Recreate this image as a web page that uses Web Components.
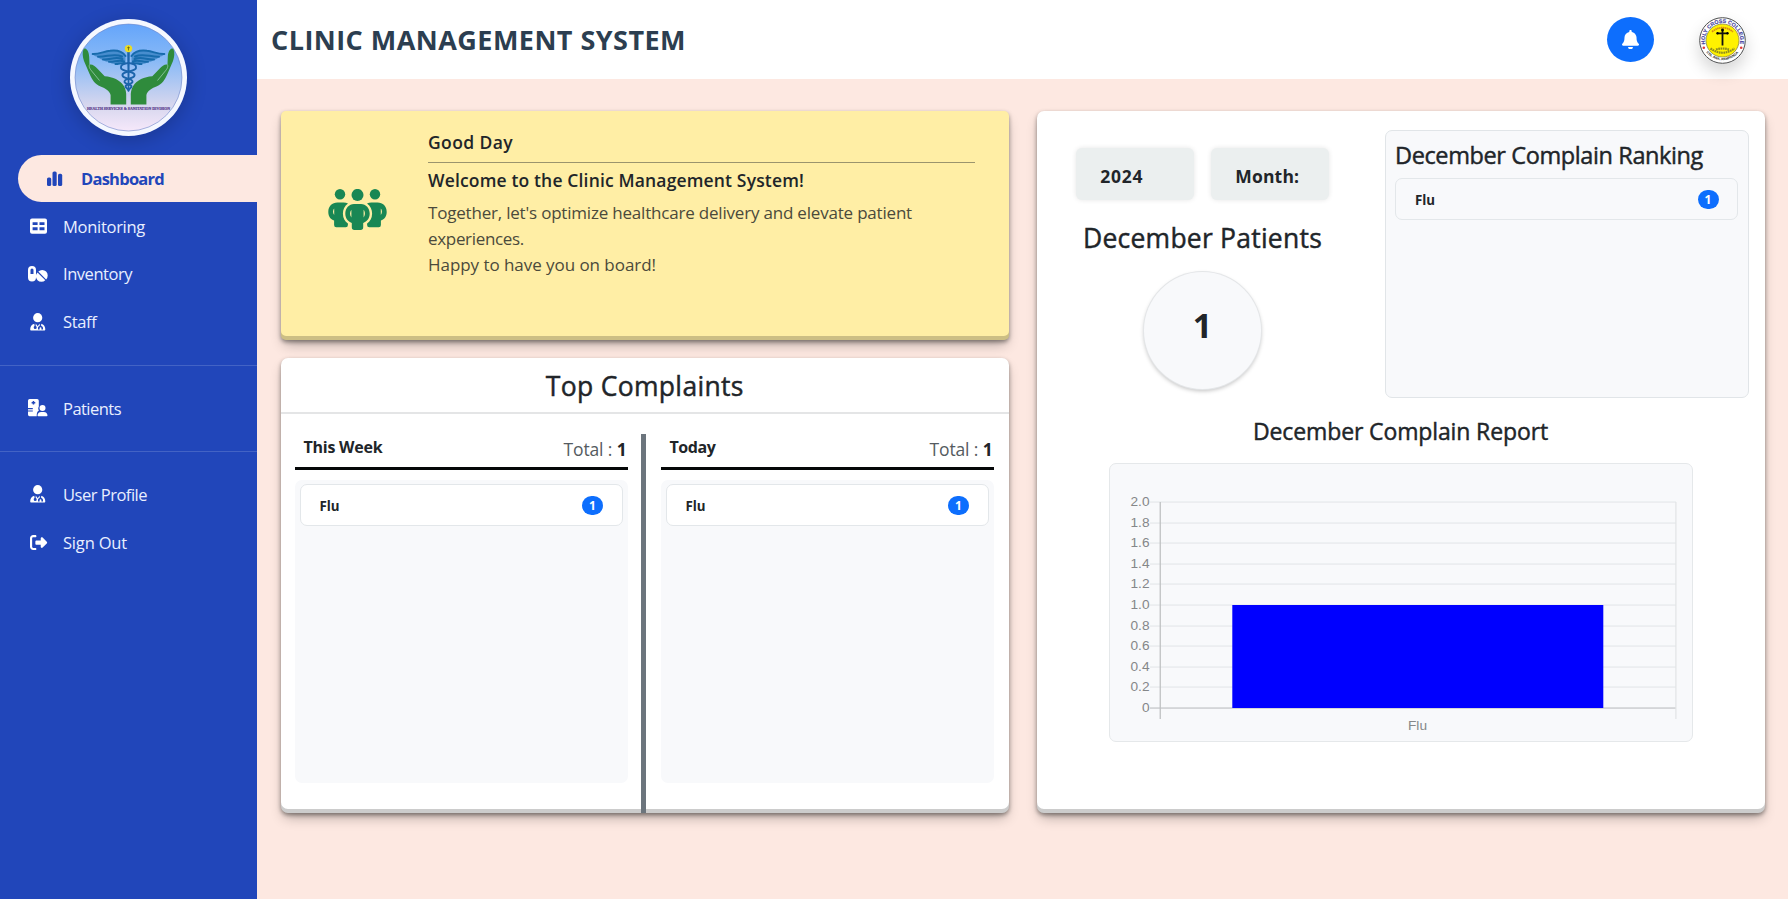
<!DOCTYPE html>
<html lang="en">
<head>
<meta charset="utf-8">
<title>Clinic Management System</title>
<style>
html,body{margin:0;height:100%;overflow:hidden}
body{background:#fde8e1;color:#212529;font-family:"Open Sans","Noto Sans",sans-serif}
</style>
</head>
<body>
<clinic-app></clinic-app>
<script>
const define=(name,html,init)=>{
  const t=document.createElement('template');
  t.innerHTML=html;
  customElements.define(name,class extends HTMLElement{
    constructor(){super();this.attachShadow({mode:'open'}).append(t.content.cloneNode(true));}
    connectedCallback(){if(init)init(this,this.shadowRoot);}
  });
};

/* One line of text whose tracking is adjusted to fill the given width */
define('fit-text',`<style>:host{display:block;white-space:nowrap;line-height:24px;width:max-content}:host([weight="500"]){-webkit-text-stroke:.45px currentColor}span{display:inline-block}</style><span><slot></slot></span>`,
(el,root)=>{
  el.style.fontSize=el.getAttribute('size')+'px';
  el.style.fontWeight=el.getAttribute('weight')||'400';
  const s=root.querySelector('span'),w=+el.getAttribute('w');
  if(w){
    const n=el.textContent.length,extra=(w-s.getBoundingClientRect().width)/n;
    s.style.letterSpacing=extra.toFixed(3)+'px';
  }
});

const icons={
dashboard:'<rect x="0" y="6.5" width="4.200" height="8.5" rx="1.6"/><rect x="5.500" y="0.5" width="4.200" height="14.5" rx="1.6"/><rect x="11" y="2.8" width="4.200" height="12.2" rx="1.6"/>',
table:'<path fill-rule="evenodd" d="M2 .5h13a2 2 0 0 1 2 2v11.300a2 2 0 0 1-2 2H2a2 2 0 0 1-2-2V2.500a2 2 0 0 1 2-2zM2.600 4.200v2.900h5V4.200zm6.900 0v2.900h5V4.200zM2.600 9.300v3h5v-3zm6.900 0v3h5v-3z"/>',
pills:'<path fill-rule="evenodd" d="M4 0a4 4 0 0 1 4 4v7.500a4 4 0 0 1-8 0V4a4 4 0 0 1 4-4zM2.500 4v4h3V4a1.500 1.500 0 0 0-3 0z"/><path d="M10.300 5.600a5.500 5.500 0 0 1 7.800 7.800zM9.500 6.400l7.800 7.800a5.500 5.500 0 0 1-7.800-7.800z"/>',
doctor:'<circle cx="7.700" cy="4.700" r="4.600"/><path fill-rule="evenodd" d="M4.300 10.700C1.600 11.500.2 13.600.2 16.300c0 .8.4 1.300 1.100 1.300h12.900c.7 0 1.100-.5 1.100-1.300 0-2.700-1.400-4.800-4.100-5.600v2.200c1.200.3 1.800 1 1.800 2.200v1.300h-1.600v-1.200c0-.7-.3-1-.9-1s-.9.300-.9 1v1.200H8V15c0-1.200.6-1.900 1.700-2.100v-2.400l-2 2.800-2-2.800v2.600c.7.300 1 .8 1 1.400a1.500 1.500 0 1 1-3 0c0-.6.3-1.100.900-1.400z"/>',
patient:'<path fill-rule="evenodd" d="M1.800 0h7.300a1.700 1.700 0 0 1 1.700 1.700v5.700c-1 1.600-.5 3.200.1 4-1.600.9-2.300 2.800-2.200 5.900H1.800A1.700 1.700 0 0 1 0 15.600v-3h4.800v-1.100H0v-1.300h4.800V9H0V1.700A1.700 1.700 0 0 1 1.800 0zM4.700 2v1H3.600v1.500h1.100v1.100h1.500V4.500h1.100V3H6.200V2z"/><circle cx="14.500" cy="9" r="3"/><path d="M13.200 12.900h2.600c2.300 0 3.700 1.500 3.700 3.600 0 .5-.4.800-.9.800H10.400c-.5 0-.9-.3-.9-.8 0-2.100 1.400-3.600 3.700-3.600z"/>',
signout:'<path transform="scale(.0335)" d="M377.900 105.900L500.700 228.700c7.200 7.200 11.300 17.100 11.300 27.300s-4.100 20.100-11.300 27.300L377.900 406.100c-6.400 6.400-15 9.900-24 9.900c-18.700 0-33.900-15.200-33.900-33.900l0-62.100-128 0c-17.700 0-32-14.300-32-32l0-64c0-17.700 14.300-32 32-32l128 0 0-62.100c0-18.700 15.200-33.900 33.900-33.900c9 0 17.600 3.600 24 9.900zM160 96L96 96c-17.700 0-32 14.300-32 32l0 256c0 17.700 14.300 32 32 32l64 0c17.700 0 32 14.300 32 32s-14.300 32-32 32l-64 0c-53 0-96-43-96-96L0 128C0 75 43 32 96 32l64 0c17.700 0 32 14.300 32 32s-14.300 32-32 32z"/>'
};
const dims={dashboard:[16,15],table:[17,16],pills:[20,15],doctor:[16,18],patient:[20,18],signout:[17,17]};

define('nav-item',`<style>
:host{display:flex;align-items:center;height:47.800px;color:#e9efff;box-sizing:border-box;padding-left:24px}
:host([active]){margin-left:18px;background:#fde8e1;color:#2146ba;border-radius:24px 0 0 24px}
.i{width:28px;display:flex;justify-content:center;flex:none;margin-right:11px}
svg{fill:#fff;display:block;overflow:visible}
:host([active]) .i{width:26px;margin-right:13px}
:host([active]) svg{fill:#2146ba}
slot{display:block;padding-top:1px}
</style><div class="i"></div><slot></slot>`,(el,root)=>{
  const k=el.getAttribute('icon'),[w,h]=dims[k];
  root.querySelector('.i').innerHTML=`<svg width="${w}" height="${h}" viewBox="0 0 ${w} ${h}">${icons[k]}</svg>`;
});

const halfEmblem=`
<path fill="#2f8b3c" d="M15 29.500c2.500.5 4 4 4.200 8.500l.3 7.500c2.800-.6 5.200 1 8 4.200l7.200 7.600c8 .6 15.500 3.800 19 9.500 2 3.300 2.800 7 2.500 11V85.500H40.600V76c-1-4-5-6.500-10-8.500-6-2.500-8.500-7-11-12.500L14 42c-1.500-4-1.700-9-.6-11.500.4-.8.900-1.100 1.600-1z"/>
<path fill="none" stroke="#8ec4a0" stroke-width=".9" d="M19.500 45.500c-1 3 1 5 3 7.500l7 8.500"/>
<path fill="#176bad" fill-opacity=".55" d="M55.500 38C52 32 46 31 40 31.800c-6 .6-11 3.500-17.300 3.200 1.500 2 3 2.800 5.300 2.700 1.400 2 3 3 5 2.800 1.300 1.700 3.500 2.500 6 2.300 2 1.700 4 2.500 6.500 2.200 3-1 6.500-1 10 0z"/>
<path fill="none" stroke="#176bad" stroke-width="2" stroke-linecap="round" d="M55.500 37C52 32 46 31 40 31.800c-6 .6-11 3.500-17.300 3.200M52 37.500c-8-3.500-15 .5-24 .2M52.500 40c-7-3-12.500 1-19.500.5M54 42.500c-5-2.500-10 1-15 .3M55 44.500c-3-1.200-6 .6-9.500.5"/>`;

define('health-logo',`<style>
:host{display:block;width:117px;height:117px;border-radius:50%;box-shadow:0 4px 20px rgba(0,0,0,.22)}
svg{display:block}
</style>
<svg width="117" height="117" viewBox="0 0 117 117">
<defs><linearGradient id="sky" x1="0" y1="0" x2="0" y2="1"><stop offset="0" stop-color="#64a5fb"/><stop offset=".35" stop-color="#8abaf6"/><stop offset=".75" stop-color="#d5d6ee"/><stop offset="1" stop-color="#f6e8fa"/></linearGradient></defs>
<circle cx="58.500" cy="58.500" r="58.500" fill="#f5f8ff"/>
<circle cx="58.500" cy="58.500" r="53.500" fill="url(#sky)" stroke="#6f86c9" stroke-width=".6"/>
<g>${halfEmblem}</g>
<g transform="translate(117 0) scale(-1 1)">${halfEmblem}</g>
<path fill="#1c64ab" d="M57.200 31h2.600l-.5 39-.8 3-.8-3z"/>
<g fill="none" stroke="#1c64ab" stroke-width="1.900" stroke-linecap="round"><path d="M58.500 44c-6 .5-8 2.500-7.500 5 .8 4 14.500 2.800 13.500 7.500-.8 3.700-10.500 2.700-10 6.300.5 2.800 7.500 2.200 7 5-.4 1.700-3 1.500-3 3.700"/><path d="M58.500 44c6 .5 8 2.500 7.500 5-.8 4-14.500 2.800-13.500 7.500.8 3.700 10.500 2.700 10 6.300-.5 2.800-7.500 2.200-7 5 .4 1.700 3 1.500 3 3.700"/></g>
<circle cx="58.500" cy="29.600" r="3.700" fill="#e9dc26"/><path stroke="#695f14" stroke-width=".8" d="M58.500 27.500v4M57.200 28.700h2.600"/>
<text x="58.500" y="91" text-anchor="middle" textLength="83" lengthAdjust="spacingAndGlyphs" font-family="Liberation Serif,serif" font-weight="700" font-size="4.300" fill="#583b8c" stroke="#583b8c" stroke-width=".2">HEALTH SERVICES &amp; SANITATION DIVISION</text>
</svg>`);

define('college-seal',`<style>:host{display:block;width:47px;height:47px;border-radius:50%;box-shadow:0 8px 16px rgba(0,0,0,.16)}svg{display:block}</style>
<svg width="47" height="47" viewBox="0 0 47 47">
<defs><path id="top" d="M6.760 28.940A17.600 17.600 0 1 1 40.240 28.940"/><path id="bottom" d="M6.300 34A20.700 20.700 0 0 0 40.700 34"/></defs>
<circle cx="23.500" cy="23.500" r="22.800" fill="#fff" stroke="#4a4b4c" stroke-width="1"/>
<circle cx="23.500" cy="23.500" r="16.500" fill="#fff200" stroke="#8b8748" stroke-width=".8"/>
<text font-family="Liberation Sans,sans-serif" font-weight="700" font-size="5.300" fill="#46429d" stroke="#46429d" stroke-width=".15"><textPath href="#top" startOffset="2">HOLY CROSS COLLEGE</textPath></text>
<text font-family="Liberation Sans,sans-serif" font-weight="700" font-size="3.400" fill="#222"><textPath href="#bottom" startOffset="1.500">STA. ANA, PAMPANGA</textPath></text>
<path fill="none" stroke="#d98a12" stroke-width="1.800" stroke-dasharray="1.500 .5" d="M13 14.800Q23.500 6.500 34 14.800"/>
<path fill="none" stroke="#111" stroke-width="1.800" d="M23.500 12.300v16.200M18 16.300h11"/><circle cx="23.500" cy="13" r="1.400"/><circle cx="18.500" cy="16.300" r="1.200"/><circle cx="28.500" cy="16.300" r="1.200"/>
<path fill="none" stroke="#8e8c20" stroke-width="2.200" stroke-dasharray="1.700 .6" d="M11.500 31.500Q23.500 40 35.500 31.500M17 32.500q6.500-2 13 0"/>
<circle cx="4.800" cy="30.700" r="1.300" fill="#e23b38"/><circle cx="42.200" cy="30.700" r="1.300" fill="#e23b38"/>
</svg>`);

define('side-bar',`<style>
:host{display:block;background:#2146ba;box-sizing:border-box;padding-top:18.500px}
health-logo{margin:0 auto 19px 70px}
hr{border:0;height:1px;margin:19px 0 18.500px;background:#4363c5}
</style>
<health-logo></health-logo>
<nav>
<nav-item active icon="dashboard"><fit-text w="83" size="16.500" weight="700">Dashboard</fit-text></nav-item>
<nav-item icon="table"><fit-text w="82" size="16.500">Monitoring</fit-text></nav-item>
<nav-item icon="pills"><fit-text w="69" size="16.500">Inventory</fit-text></nav-item>
<nav-item icon="doctor"><fit-text w="33.500" size="16.500">Staff</fit-text></nav-item>
<hr>
<nav-item icon="patient"><fit-text w="58" size="16.500">Patients</fit-text></nav-item>
<hr>
<nav-item icon="doctor"><fit-text w="84" size="16.500">User Profile</fit-text></nav-item>
<nav-item icon="signout"><fit-text w="64" size="16.500">Sign Out</fit-text></nav-item>
</nav>`);

define('top-bar',`<style>
:host{display:flex;align-items:center;height:79px;box-sizing:border-box;background:#fff;padding:0 42px 0 14px;color:#2c3e50}
.bell{margin-left:auto;margin-right:45px;width:47px;height:45px;border-radius:50%;background:#0d6efd;display:flex;align-items:center;justify-content:center}
svg{fill:#fff}college-seal{margin-top:2px}
</style>
<fit-text w="415" size="27" weight="700">CLINIC MANAGEMENT SYSTEM</fit-text>
<div class="bell"><svg width="17" height="19.500" viewBox="0 0 448 512"><path d="M224 0c-17.700 0-32 14.300-32 32V51.200C119 66 64 130.600 64 208v18.800c0 47-17.300 92.400-48.500 127.600l-7.400 8.300c-8.400 9.400-10.400 22.900-5.300 34.400S19.400 416 32 416H416c12.600 0 24-7.400 29.200-18.900s3.100-25-5.300-34.400l-7.400-8.300C401.300 319.200 384 273.900 384 226.800V208c0-77.400-55-142-128-156.800V32c0-17.700-14.300-32-32-32zm45.300 493.300c12-12 18.700-28.300 18.700-45.300H224 160c0 17 6.700 33.300 18.700 45.300s28.300 18.700 45.300 18.700s33.300-6.700 45.300-18.700z"/></svg></div>
<college-seal></college-seal>`);

define('shadow-card',`<style>:host{display:block;box-sizing:border-box;background:#fff;border-radius:7px;box-shadow:rgba(0,0,0,.4) 0 2px 4px,rgba(0,0,0,.3) 0 7px 13px -3px,rgba(0,0,0,.2) 0 -4px 0 inset}</style><slot></slot>`);

define('welcome-panel',`<style>
:host{display:grid;grid-template-columns:147.500px 1fr;padding:19px 34px 0 0}
.icon{padding:59px 0 0 47px}
svg{display:block;fill:#198754}
hr{border:0;height:1px;background:#9b946d;margin:8px 0 4.500px}
.copy{margin-top:8.500px;color:#4b4a3b}
.copy fit-text{line-height:26.200px}
</style>
<div class="icon"><svg width="59" height="41" viewBox="0 0 59 41">
<circle cx="12" cy="5.300" r="5.200"/><circle cx="47" cy="5.300" r="5.200"/><circle cx="29.500" cy="5.900" r="6"/>
<path fill-rule="evenodd" d="M9.500 13.500h6c1.700 0 3.200.4 4.500 1.100-3.400 2.500-5.200 6-5.100 10.200.1 4.500 2 7.700 5 9.600V36a2.200 2.200 0 0 1-2.200 2.200H8.300A2.200 2.200 0 0 1 6.100 36v-4.500C2.500 30 .3 27.300.3 22.900c0-5.800 3.800-9.400 9.200-9.400zM6.200 19.500c-1.400 1.400-1.700 4.400 0 6.500z"/>
<path fill-rule="evenodd" d="M49.500 13.500h-6c-1.700 0-3.200.4-4.500 1.100 3.400 2.500 5.200 6 5.100 10.200-.1 4.500-2 7.700-5 9.600V36a2.200 2.200 0 0 0 2.200 2.200h9.400a2.200 2.200 0 0 0 2.200-2.200v-4.500c3.600-1.500 5.800-4.200 5.800-8.600 0-5.800-3.800-9.400-9.200-9.400zM52.800 19.500c1.400 1.400 1.700 4.400 0 6.500z"/>
<path fill-rule="evenodd" d="M26 14.900h7c5 0 8.700 4.300 8.700 9.600 0 4.600-2.600 8-6.500 9.500v4.300a2.600 2.600 0 0 1-2.600 2.600h-6.200a2.600 2.600 0 0 1-2.600-2.600V34c-3.900-1.500-6.500-4.900-6.500-9.500 0-5.300 3.700-9.600 8.700-9.600zM23.400 20.800c-1.700 1.800-1.900 5.500 0 7.700zM35.600 20.800v7.700c1.900-2.200 1.700-5.900 0-7.700z"/>
</svg></div>
<div>
<fit-text w="85" size="17.500" weight="600">Good Day</fit-text><hr>
<fit-text w="376" size="17.500" weight="600">Welcome to the Clinic Management System!</fit-text>
<div class="copy"><fit-text w="484" size="17">Together, let's optimize healthcare delivery and elevate patient</fit-text>
<fit-text w="96" size="17">experiences.</fit-text>
<fit-text w="228" size="17">Happy to have you on board!</fit-text></div>
</div>`);

define('rank-row',`<style>
:host{display:flex;align-items:center;justify-content:space-between;height:42px;box-sizing:border-box;border:1px solid #e3e7ea;border-radius:7px;padding:0 18.500px 0 19px}
b{display:flex;align-items:center;justify-content:center;width:21px;height:19px;border-radius:10px;background:#0d6efd;color:#fff;font-size:12px;line-height:19px}
fit-text{padding-top:2px}
</style><fit-text size="13.300" weight="700"><slot></slot></fit-text><b>1</b>`);

define('complaint-column',`<style>
:host{display:block;width:333px}
.head{display:flex;justify-content:space-between;height:33px;box-sizing:content-box;border-bottom:3px solid #050708;padding:0 1px 0 9px}
.total{color:#555b60;margin-top:3px}
.total b{color:#212529}
.list{margin-top:10px;height:303px;background:#f8f9fb;border-radius:7px;box-sizing:border-box;padding:4px 5px}
slot{display:block;padding-top:1px}
rank-row{background:#fff}
</style>
<div class="head"><slot name="title"></slot><fit-text class="total" w="63" size="17.500">Total : <b>1</b></fit-text></div>
<div class="list"><rank-row>Flu</rank-row></div>`);

define('top-complaints',`<style>
:host{display:flex;flex-direction:column;height:455px}
header{height:54px;border-bottom:2px solid #e4e5e6;display:flex;align-items:center;justify-content:center}
header fit-text{padding-top:2px}
.cols{display:flex;flex:1;padding:0 14px}
.cols complaint-column{margin-top:20px}
.rule{width:5px;margin:20px 14.500px 0 13.500px;background:#6c757d}
</style>
<header><fit-text w="198" size="26.500" weight="500">Top Complaints</fit-text></header>
<div class="cols">
<complaint-column><fit-text slot="title" w="79" size="16" weight="700">This Week</fit-text></complaint-column>
<div class="rule"></div>
<complaint-column><fit-text slot="title" w="46" size="16" weight="700">Today</fit-text></complaint-column>
</div>`);

define('bar-chart',`<style>
:host{display:block;width:584px;height:279px;box-sizing:border-box;border:1px solid #e5e8ea;border-radius:7px;background:#f8f9fb}
svg{display:block}text{font:13.700px "Liberation Sans",Arial,sans-serif;fill:#858789}
</style><svg width="582" height="277" viewBox="1109 464 582 277"></svg>`,(el,root)=>{
  let s='';
  for(let i=0;i<=10;i++){
    const y=Math.round(502+i*20.6);
    s+=`<rect x="1149" y="${y-.6}" width="526" height="1.300" fill="${i===10?'#c5c7c9':'#e7e9eb'}"/><text x="1148.500" y="${y+4}" text-anchor="end">${i===10?'0':(2-i*.2).toFixed(1)}</text>`;
  }
  s+='<rect x="1158.600" y="502" width="1.300" height="217" fill="#bfc1c3"/><rect x="1674.300" y="502" width="1.200" height="217" fill="#e2e4e6"/><rect x="1231.300" y="605" width="371" height="103" fill="#0000ff"/><text x="1416.500" y="730" text-anchor="middle">Flu</text>';
  root.querySelector('svg').innerHTML=s;
});

define('month-report',`<style>
:host{display:block;padding:19px 15.500px 0 0}
.top{display:flex;justify-content:space-between;height:267px}
.stats{width:332px;padding:18px 0 0 0;display:flex;flex-direction:column;align-items:center}
.btns{display:flex;gap:17.500px;width:252.500px}
.btn{width:117.500px;height:52px;border-radius:6px;background:#ebefef;box-shadow:0 0 5px rgba(0,0,0,.1);box-sizing:border-box;padding:15.500px 0 0 24px}
.title{margin-top:25.500px}
.circle{margin-top:22px;width:117px;height:117px;border-radius:50%;background:#f8f9fb;box-shadow:0 0 0 1px #e4e6e8,0 2px 4px rgba(0,0,0,.25);display:flex;align-items:center;justify-content:center}
.circle fit-text{margin-top:-10px}
.rank{width:364px;height:268px;box-sizing:border-box;border:1px solid #e1e5e8;border-radius:7px;background:#f8f9fb;padding:12px 10px 0 9px}
.rank rank-row{margin-top:11px}
.report{display:flex;flex-direction:column;align-items:center;margin-top:22px;margin-right:-15.500px}
bar-chart{margin-top:20px}
</style>
<div class="top">
<div class="stats">
<div class="btns"><div class="btn"><fit-text w="43" size="17.500" weight="700">2024</fit-text></div><div class="btn"><fit-text w="64" size="17.500" weight="700">Month:</fit-text></div></div>
<fit-text class="title" w="239" size="26.500" weight="500">December Patients</fit-text>
<div class="circle"><fit-text size="34" weight="700">1</fit-text></div>
</div>
<div class="rank"><fit-text w="308" size="23.500" weight="500">December Complain Ranking</fit-text><rank-row>Flu</rank-row></div>
</div>
<div class="report"><fit-text w="295" size="23" weight="500">December Complain Report</fit-text><bar-chart></bar-chart></div>`);

define('clinic-app',`<style>
:host{display:grid;grid-template-columns:257px 1fr;height:100vh}
.board{display:grid;grid-template-columns:728.500px 728px;grid-template-rows:229px 455px;gap:18px 27.500px;padding:32px 23px 0 23.500px}
.greet{background:#ffeea5;border-radius:5px}
.report{grid-column:2;grid-row:1/3}
</style>
<side-bar></side-bar>
<main><top-bar></top-bar>
<div class="board">
<shadow-card class="greet"><welcome-panel></welcome-panel></shadow-card>
<shadow-card class="report"><month-report></month-report></shadow-card>
<shadow-card><top-complaints></top-complaints></shadow-card>
</div></main>`);
</script>
</body>
</html>
